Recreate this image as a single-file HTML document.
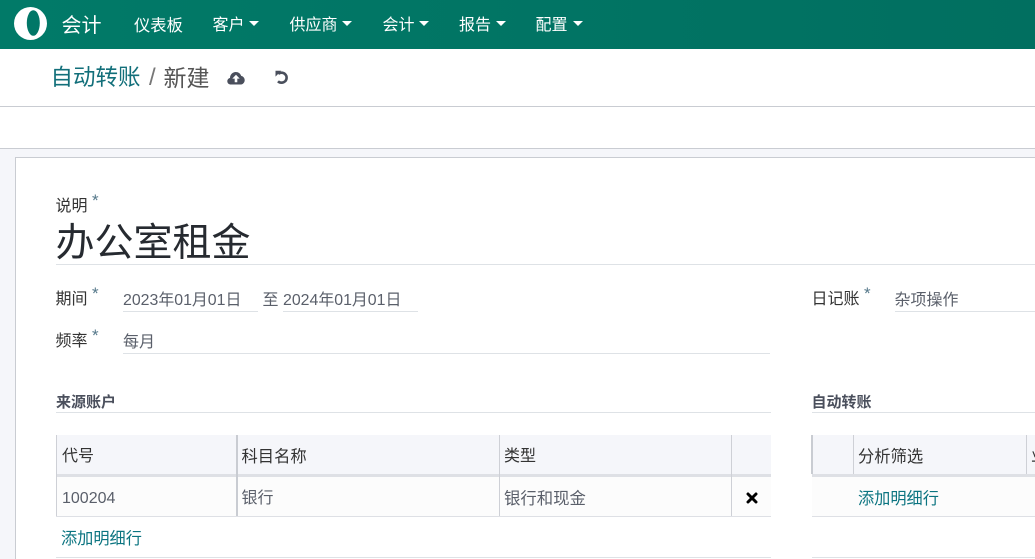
<!DOCTYPE html>
<html lang="zh"><head><meta charset="utf-8"><title>自动转账</title>
<style>
html,body{margin:0;padding:0;width:1035px;height:559px;overflow:hidden}
body{position:relative;background:#fff;font-family:"Liberation Sans","Noto Sans CJK SC",sans-serif;font-size:16px;color:#4c4c4c}
.t{position:absolute;white-space:nowrap;line-height:24px;height:24px}
.b{position:absolute}
.nav{color:#fff;font-size:16px}
.c{position:absolute;top:21px;width:0;height:0;border-left:5px solid transparent;border-right:5px solid transparent;border-top:5px solid #fff}
.l{color:#333}
.v{color:#5a5f6a}
.s{position:absolute;font-size:17px;color:#55788a;line-height:17px}
.g{color:#0b7480}
</style></head><body>
<div class="b" style="left:0;top:0;width:1035px;height:49px;background:linear-gradient(90deg,#017a68,#016f60)"></div>
<svg class="b" style="left:13px;top:6px" width="36" height="36" viewBox="0 0 36 36"><circle cx="17.500" cy="17.500" r="16.500" fill="#fff"/><ellipse cx="20.300" cy="17" rx="6.500" ry="12.800" fill="#017767"/></svg>
<div class="t nav" style="left:61.500px;top:14px;font-size:20px">会计</div>
<div class="t nav" style="left:134px;top:14px;font-size:16.300px">仪表板</div>
<div class="t nav" style="left:212.500px;top:14px">客户</div><div class="c" style="left:249px"></div>
<div class="t nav" style="left:289.500px;top:14px">供应商</div><div class="c" style="left:342px"></div>
<div class="t nav" style="left:382.500px;top:14px">会计</div><div class="c" style="left:419px"></div>
<div class="t nav" style="left:459px;top:14px">报告</div><div class="c" style="left:496px"></div>
<div class="t nav" style="left:535.500px;top:14px">配置</div><div class="c" style="left:573px"></div>

<div class="t" style="left:50.500px;top:65px;font-size:22.500px;line-height:26px;height:26px;color:#126f7a">自动转账</div>
<div class="t" style="left:149px;top:65px;font-size:24px;line-height:26px;height:26px;color:#777">/</div>
<div class="t" style="left:163.500px;top:65px;font-size:23px;line-height:26px;height:26px;color:#555">新建</div>
<svg class="b" style="left:227px;top:71px" width="18" height="14" viewBox="0 0 18 14"><path d="M4 13.500C1.800 13.500.3 12 .3 10.200.3 8.600 1.400 7.300 3 7 3 3.500 5.600 1 8.800 1c2.600 0 4.700 1.600 5.400 3.900C16.200 5.300 17.700 7 17.700 9.200c0 2.400-1.900 4.300-4.300 4.300z" fill="#4a4f5c"/><path d="M9 3.800l3.700 3.800h-2.400v3.700H7.700V7.600H5.300z" fill="#fff"/></svg>
<svg class="b" style="left:274px;top:70px" width="16" height="16" viewBox="0 0 16 16"><path d="M4.200 3.800C5.200 3 6.300 2.700 7.500 2.700c2.900 0 5.100 2.200 5.100 5s-2.200 5-5.100 5c-1.400 0-2.600-.5-3.500-1.400" fill="none" stroke="#4a4f5c" stroke-width="2.600"/><path d="M1.500.8h5.800l-5.800 5.800z" fill="#4a4f5c"/></svg>

<div class="b" style="left:0;top:106px;width:1035px;height:1px;background:#c9ccd2"></div>
<div class="b" style="left:0;top:148px;width:1035px;height:411px;background:#f5f6fa;border-top:1px solid #c9ccd2;box-sizing:border-box"></div>
<div class="b" style="left:15px;top:157px;width:1020px;height:402px;background:#fff;border:solid #c9ccd2;border-width:1px 0 0 1px;box-sizing:border-box"></div>

<div class="t l" style="left:55.500px;top:195px">说明</div><div class="s" style="left:92px;top:192px">*</div>
<div class="t" style="left:55.500px;top:218px;font-size:39px;line-height:52px;height:52px;color:#262a30">办公室租金</div>
<div class="b" style="left:56px;top:264px;width:979px;height:1px;background:#dee2e6"></div>

<div class="t l" style="left:55.500px;top:288px">期间</div><div class="s" style="left:92px;top:285px">*</div>
<div class="t v" style="left:123px;top:289px;font-size:15.900px">2023年01月01日</div>
<div class="b" style="left:123px;top:311px;width:135px;height:1px;background:#dee2e6"></div>
<div class="t v" style="left:262.500px;top:289px">至</div>
<div class="t v" style="left:283px;top:289px;font-size:15.900px">2024年01月01日</div>
<div class="b" style="left:283px;top:311px;width:135px;height:1px;background:#dee2e6"></div>

<div class="t l" style="left:55.500px;top:330px">频率</div><div class="s" style="left:92px;top:327px">*</div>
<div class="t v" style="left:123px;top:331px">每月</div>
<div class="b" style="left:123px;top:353px;width:647px;height:1px;background:#dee2e6"></div>

<div class="t l" style="left:811.500px;top:288px">日记账</div><div class="s" style="left:864px;top:285px">*</div>
<div class="t v" style="left:894.500px;top:289px">杂项操作</div>
<div class="b" style="left:895px;top:311px;width:140px;height:1px;background:#dee2e6"></div>

<div class="t" style="left:56px;top:391px;font-size:15px;font-weight:700;color:#4a4f5c">来源账户</div>
<div class="b" style="left:56px;top:412px;width:715px;height:1px;background:#dee2e6"></div>
<div class="t" style="left:811.500px;top:391px;font-size:15px;font-weight:700;color:#4a4f5c">自动转账</div>
<div class="b" style="left:812px;top:412px;width:223px;height:1px;background:#dee2e6"></div>

<div class="b" style="left:56px;top:435px;width:715px;height:39px;background:#f5f6fa"></div>
<div class="b" style="left:56px;top:474px;width:715px;height:3px;background:#dee0e5"></div>
<div class="b" style="left:56px;top:477px;width:715px;height:39px;background:#fcfcfc"></div>
<div class="b" style="left:56px;top:516px;width:715px;height:1px;background:#dee0e5"></div>
<div class="b" style="left:56px;top:435px;width:1px;height:81px;background:#ced0d6"></div>
<div class="b" style="left:236px;top:435px;width:2px;height:81px;background:#c9ccd2"></div>
<div class="b" style="left:499px;top:435px;width:1px;height:81px;background:#ced0d6"></div>
<div class="b" style="left:731px;top:435px;width:1px;height:81px;background:#ced0d6"></div>
<div class="t l" style="left:62px;top:445px">代号</div>
<div class="t l" style="left:241.500px;top:445px;font-size:16.300px">科目名称</div>
<div class="t l" style="left:504px;top:445px">类型</div>
<div class="t v" style="left:62px;top:487px">100204</div>
<div class="t v" style="left:241.500px;top:487px">银行</div>
<div class="t v" style="left:504px;top:487px;font-size:16.400px">银行和现金</div>
<svg class="b" style="left:746px;top:492px" width="12" height="12" viewBox="0 0 12 12"><path d="M2 2l8 8M10 2l-8 8" stroke="#000" stroke-width="3" stroke-linecap="round"/></svg>
<div class="t g" style="left:61px;top:527px;font-size:16.200px">添加明细行</div>
<div class="b" style="left:56px;top:557px;width:715px;height:1px;background:#dee2e6"></div>

<div class="b" style="left:812px;top:435px;width:223px;height:39px;background:#f5f6fa"></div>
<div class="b" style="left:812px;top:474px;width:223px;height:3px;background:#dee0e5"></div>
<div class="b" style="left:812px;top:477px;width:223px;height:39px;background:#fcfcfc"></div>
<div class="b" style="left:812px;top:516px;width:223px;height:1px;background:#dee0e5"></div>
<div class="b" style="left:811px;top:435px;width:2px;height:39px;background:#c9ccd2"></div>
<div class="b" style="left:853px;top:435px;width:1px;height:39px;background:#ced0d6"></div>
<div class="b" style="left:1026px;top:435px;width:1px;height:39px;background:#ced0d6"></div>
<div class="t l" style="left:858px;top:445px;font-size:16.300px">分析筛选</div>
<div class="t l" style="left:1031px;top:445px">业</div>
<div class="t g" style="left:858px;top:487px;font-size:16.200px">添加明细行</div>
<div class="b" style="left:812px;top:557px;width:223px;height:1px;background:#dee2e6"></div>
</body></html>
